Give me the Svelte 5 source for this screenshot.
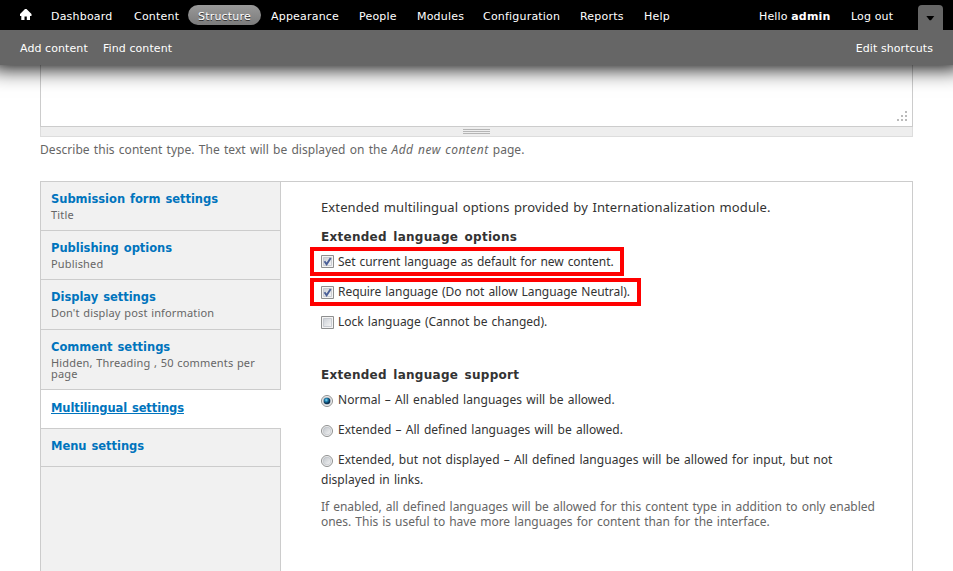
<script>
  const menu = [
    { label: 'Dashboard', width: 83 },
    { label: 'Content', width: 64 },
    { label: 'Structure', width: 73, active: true },
    { label: 'Appearance', width: 88 },
    { label: 'People', width: 58 },
    { label: 'Modules', width: 66 },
    { label: 'Configuration', width: 97 },
    { label: 'Reports', width: 64 },
    { label: 'Help', width: 46 }
  ];
  const tabs = [
    { title: 'Submission form settings', summary: 'Title', height: 49 },
    { title: 'Publishing options', summary: 'Published', height: 49 },
    { title: 'Display settings', summary: "Don't display post information", height: 50 },
    { title: 'Comment settings', summary: 'Hidden, Threading , 50 comments per page', height: 60 },
    { title: 'Multilingual settings', height: 39, selected: true },
    { title: 'Menu settings', height: 38 }
  ];
  const checks = [
    { label: 'Set current language as default for new content.', on: true, mark: 'first' },
    { label: 'Require language (Do not allow Language Neutral).', on: true, mark: 'second' },
    { label: 'Lock language (Cannot be changed).', on: false, mark: '' }
  ];
  const radios = [
    { label: 'Normal – All enabled languages will be allowed.', on: true },
    { label: 'Extended – All defined languages will be allowed.', on: false },
    { label: 'Extended, but not displayed – All defined languages will be allowed for input, but not displayed in links.', on: false }
  ];
</script>

<div class="page">
  <header>
    <nav class="bar">
      <svg class="home" width="12" height="11" viewBox="0 0 12 11"><path d="M5 0h1.500L11.500 5V7H10v4H6.800V7.500H4.500V11H1.300V7H0V5z" fill="#fff" /></svg>
      <ul>
        {#each menu as m}
          <li class:active={m.active} style="width:{m.width}px">{m.label}</li>
        {/each}
      </ul>
      <span class="hello">Hello <b>admin</b></span>
      <span class="logout">Log out</span>
      <span class="toggle"><svg width="9" height="5" viewBox="0 0 9 5"><path d="M0.300 0h8L5 4.300H3.600z" fill="#000" /></svg></span>
    </nav>
    <div class="drawer">
      <span class="add">Add content</span><span class="find">Find content</span><span class="edit">Edit shortcuts</span>
    </div>
  </header>

  <main>
    <div class="textarea">
      <svg width="10" height="10" viewBox="0 0 10 10" fill="#bbb"><path d="M8 0h2v2H8zM4 4h2v2H4zM8 4h2v2H8zM0 8h2v2H0zM4 8h2v2H4zM8 8h2v2H8z" /></svg>
    </div>
    <div class="grippie"><i></i><i></i><i></i></div>
    <p class="description">Describe this content type. The text will be displayed on the <em>Add new content</em> page.</p>

    <section class="vertical-tabs">
      <ul class="tabs">
        {#each tabs as t}
          <li class:selected={t.selected} style="height:{t.height}px">
            <strong>{t.title}</strong>
            {#if t.summary}<span>{t.summary}</span>{/if}
          </li>
        {/each}
      </ul>
      <div class="pane">
        <p class="intro">Extended multilingual options provided by Internationalization module.</p>
        <h3>Extended language options</h3>
        {#each checks as c}
          <div class="check {c.mark}">
            <svg width="13" height="13" viewBox="0 0 13 13">
              <defs><linearGradient id="cb" x1="0" y1="0" x2="1" y2="1"><stop offset="0" stop-color="#cbcfd5" /><stop offset="1" stop-color="#f6f6f6" /></linearGradient></defs>
              <path d="M.5.5h12v12H.5z" fill="#f4f4f4" stroke="#8e8f8f" />
              <path d="M2.500 2.500h8v8h-8z" fill="url(#cb)" stroke="#b9bec5" stroke-opacity=".7" />
              {#if c.on}<path d="M3.500 6.300 5.600 9.300 9.700 2.900" fill="none" stroke="#4a5f97" stroke-width="1.900" />{/if}
            </svg><span>{c.label}</span>
          </div>
        {/each}
        <h3 class="support">Extended language support</h3>
        {#each radios as r, i}
          <div class="radio r{i}">
            <svg width="12" height="12" viewBox="0 0 12 12">
              <defs>
                <linearGradient id="rb" x1="0" y1="0" x2="1" y2="1"><stop offset="0" stop-color="#bfc3c8" /><stop offset="1" stop-color="#f5f5f5" /></linearGradient>
                <radialGradient id="dot" cx=".4" cy=".35"><stop offset="0" stop-color="#8fdcf8" /><stop offset=".5" stop-color="#1d7fae" /><stop offset="1" stop-color="#0b3252" /></radialGradient>
              </defs>
              <circle cx="6" cy="6" r="5.500" fill="#f4f4f4" stroke="#8e8f8f" />
              <circle cx="6" cy="6" r="3.900" fill="url(#rb)" stroke="#b9bec5" stroke-width=".6" />
              {#if r.on}<circle cx="6" cy="6" r="3.300" fill="url(#dot)" />{/if}
            </svg><span>{r.label}</span>
          </div>
        {/each}
        <p class="help">If enabled, all defined languages will be allowed for this content type in addition to only enabled ones. This is useful to have more languages for content than for the interface.</p>
      </div>
    </section>
  </main>
</div>

<style>
  :global(body) { background: #fff; overflow: hidden; }
  .page { height: 571px; overflow: hidden; display: flex; flex-direction: column; font: 12px/20px "Noto Sans", sans-serif; color: #333; }
  ul { list-style: none; margin: 0; padding: 0; }
  p, h3 { margin: 0; }
  header { position: relative; z-index: 1; flex: none; font: 11px/20px "DejaVu Sans", sans-serif; letter-spacing: .2px; color: #fff; }
  header::before { content: ""; position: absolute; z-index: -1; inset: 0 -10px; box-shadow: 0 3px 20px #000; }
  .bar { height: 30px; box-sizing: border-box; padding: 5px 10px 0 20px; background: #000; display: flex; align-items: flex-start; }
  .home { margin: 4px 9px 0 0; }
  .bar ul { display: flex; }
  .bar li { box-sizing: border-box; padding-left: 10px; white-space: nowrap; height: 20px; line-height: 24px; }
  .bar li.active { border-radius: 10px; background: linear-gradient(#999, #7b7b7b); text-shadow: 0 1px 0 #333; }
  .hello { margin-left: auto; width: 92px; line-height: 24px; white-space: nowrap; letter-spacing: .15px; }
  .logout { width: 67px; line-height: 24px; letter-spacing: .13px; }
  .toggle { width: 25px; height: 25px; border-radius: 4px 4px 0 0; background: #666; }
  .toggle svg { display: block; margin: 11px 0 0 8px; }
  .drawer { height: 35px; box-sizing: border-box; padding: 9px 20px 0; background: #666; display: flex; letter-spacing: .08px; }
  .add { width: 83px; }
  .edit { margin-left: auto; }
  main { flex: 1; width: 873px; margin-left: 40px; display: flex; flex-direction: column; min-height: 0; }
  .textarea { flex: none; height: 62px; box-sizing: border-box; border: 1px solid #ccc; border-top: 0; display: flex; justify-content: flex-end; align-items: flex-end; padding: 0 5px 5px; }
  .grippie { flex: none; height: 10px; box-sizing: border-box; border: 1px solid #ddd; border-top: 0; background: #eee; display: flex; flex-direction: column; align-items: center; gap: 1px; padding-top: 2px; }
  .grippie i { width: 27px; height: 1px; background: #b5b5b5; }
  .description { margin-top: 3px; height: 41px; color: #666; letter-spacing: .05px; word-spacing: 1px; white-space: nowrap; }
  .description em { letter-spacing: .45px; }
  .vertical-tabs { flex: 1; border: 1px solid #ccc; border-bottom: 0; display: flex; min-height: 0; }
  .tabs { width: 240px; flex: none; box-sizing: border-box; background: linear-gradient(#ccc, #ccc) right / 1px 100% no-repeat #f1f1f1; }
  .tabs li { box-sizing: border-box; border-bottom: 1px solid #ccc; padding: 9px 11px 0 10px; }
  .tabs .selected { background: #fff; padding-top: 10px; }
  .tabs strong { display: block; color: #0074bd; font: bold 11.500px/16px "DejaVu Sans", sans-serif; letter-spacing: -.03px; word-spacing: 1px; }
  .tabs .selected strong { text-decoration: underline; letter-spacing: -.1px; }
  .tabs span { display: block; margin-top: 2px; font-size: 11px; line-height: 11px; letter-spacing: .16px; word-spacing: .6px; color: #666; }
  .pane { flex: 1; padding: 15px 20px 0 40px; }
  .intro { font-size: 13px; letter-spacing: .11px; word-spacing: 1px; }
  h3 { font: bold 12px/20px "DejaVu Sans", sans-serif; letter-spacing: .27px; word-spacing: 2px; margin-top: 10px; }
  .check { display: flex; align-items: center; gap: 4px; letter-spacing: 0; word-spacing: 1px; height: 20px; white-space: nowrap; }
  .first, .second { box-sizing: border-box; margin-left: -11px; border: 4px solid #f00; padding-left: 7px; }
  .first { width: 314px; height: 29px; letter-spacing: -.08px; }
  .second { width: 331px; height: 28px; margin: 2px 0 6px -11px; letter-spacing: -.05px; }
  .support { margin-top: 33px; }
  .radio { margin-top: 10px; letter-spacing: .04px; word-spacing: 1px; }
  .r0 { margin-top: 5px; }
  .r2 { width: 530px; }
  .radio svg { vertical-align: -3px; margin-right: 5px; }
  .help { margin-top: 9px; color: #666; line-height: 15px; letter-spacing: -.03px; word-spacing: 1px; width: 562px; }
</style>
